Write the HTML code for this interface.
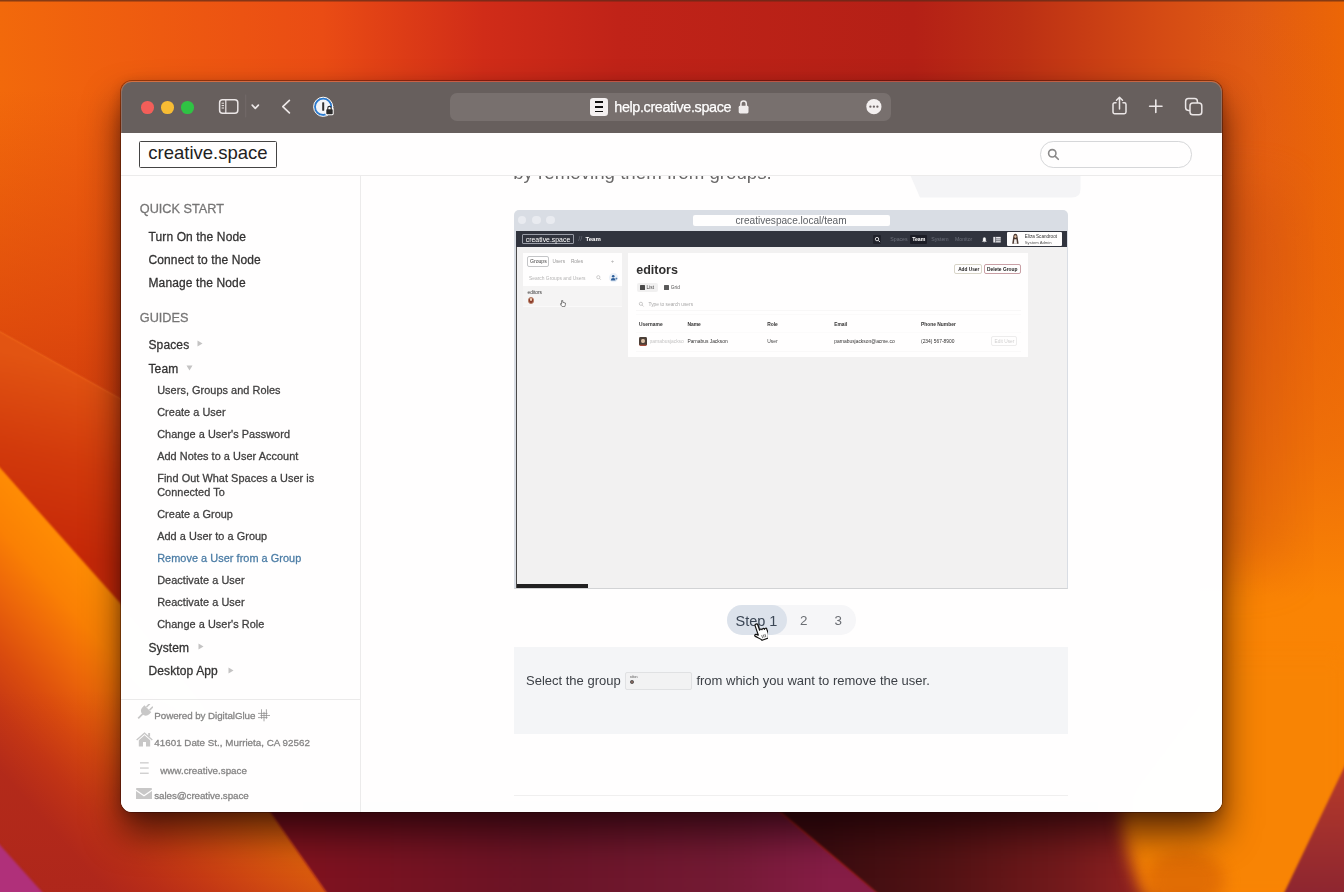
<!DOCTYPE html>
<html lang="en">
<head>
<meta charset="utf-8">
<title>Remove a User from a Group - creative.space help</title>
<style>
*{box-sizing:border-box;margin:0;padding:0}
html,body{width:1344px;height:892px;overflow:hidden;background:#d9480f}
body{font-family:"Liberation Sans",sans-serif;position:relative;color:#3a3a3a}
#wall{position:absolute;left:0;top:0;width:1344px;height:892px;display:block}
#shadow{position:absolute;left:121px;top:81px;width:1101px;height:731px;border-radius:11px;
  box-shadow:0 22px 36px 0 rgba(20,0,4,.68),0 3px 12px 0 rgba(30,0,5,.22),0 0 0 1px rgba(45,12,5,.38)}
#win{opacity:.999;position:absolute;left:121px;top:81px;width:1101px;height:731px;border-radius:11px;overflow:hidden;background:transparent}
#cap{position:absolute;left:0;top:0;width:1101px;height:14px;background:rgba(190,130,110,.55)}
#tbar{position:absolute;left:0;top:1px;width:1101px;height:51px;background:#67605e;border-radius:10px 10px 0 0;box-shadow:inset 1px 0 0 rgba(200,140,120,.4),inset -1px 0 0 rgba(200,140,120,.4)}
.tl{position:absolute;top:19.3px;width:12.6px;height:12.6px;border-radius:50%}
#url{position:absolute;left:329px;top:11.3px;width:441.4px;height:27.4px;border-radius:7px;background:#78716f}
#url .txt{-webkit-text-stroke:.25px;position:absolute;left:164.3px;top:5.9px;font-size:14.4px;line-height:16px;color:#fff;letter-spacing:-.38px;white-space:nowrap}
#fav{position:absolute;left:139.7px;top:4.5px;width:18.2px;height:18.2px;border-radius:3.2px;background:#f4f1f1}
#fav i{position:absolute;left:5.2px;width:8px;height:1.9px;background:#111}
#ticons{position:absolute;left:0;top:0}
#page{position:absolute;left:0;top:52px;width:1101px;height:679px;background:#fff}
#hdr{position:absolute;left:0;top:0;width:1101px;height:43px;border-bottom:1px solid #ececec;background:#fff;z-index:5}
#logo{position:absolute;left:18px;top:8.2px;width:138px;height:26.6px;border:1px solid #444;border-radius:1.5px;
  font-size:18.5px;line-height:21.4px;text-align:center;color:#222;white-space:nowrap}
#search{position:absolute;left:918.6px;top:8.2px;width:152px;height:26.4px;border:1px solid #d6d8da;border-radius:13.2px;background:#fff}
#search svg{position:absolute;left:6px;top:5.6px}
#side{position:absolute;left:0;top:43px;width:240px;height:636px;border-right:1px solid #ececec;background:#fff}
#main{position:absolute;left:240px;top:43px;width:861px;height:636px;background:#fff;overflow:hidden}
.sl{position:absolute;line-height:16px;white-space:nowrap;-webkit-text-stroke:.28px}
.tri,.fi{position:absolute;display:block}
#sdiv{position:absolute;left:0;top:523.4px;width:239px;height:1px;background:#ebebeb}
.t{position:absolute;white-space:nowrap}
</style>
</head>
<body>
<svg id="wall" viewBox="0 0 1344 892" preserveAspectRatio="none">
  <defs>
    <linearGradient id="gtop" x1="0" y1="0" x2="1344" y2="0" gradientUnits="userSpaceOnUse">
      <stop offset="0" stop-color="#f2690b"/>
      <stop offset="0.12" stop-color="#ee5a10"/>
      <stop offset="0.24" stop-color="#ea4c14"/>
      <stop offset="0.36" stop-color="#d02c18"/>
      <stop offset="0.46" stop-color="#c02318"/>
      <stop offset="0.68" stop-color="#b42016"/>
      <stop offset="0.76" stop-color="#bc3014"/>
      <stop offset="0.86" stop-color="#d44a14"/>
      <stop offset="0.93" stop-color="#e05a14"/>
      <stop offset="1" stop-color="#ec6606"/>
    </linearGradient>
    <linearGradient id="gright" x1="0" y1="0" x2="0" y2="892" gradientUnits="userSpaceOnUse">
      <stop offset="0" stop-color="#ec6606" stop-opacity="0"/>
      <stop offset="0.3" stop-color="#ec6a08" stop-opacity=".3"/>
      <stop offset="0.5" stop-color="#f07208" stop-opacity=".8"/>
      <stop offset="0.67" stop-color="#fa8404" stop-opacity="1"/>
      <stop offset="1" stop-color="#f88404" stop-opacity="1"/>
    </linearGradient>
    <linearGradient id="grightx" x1="1222" y1="0" x2="1344" y2="0" gradientUnits="userSpaceOnUse">
      <stop offset="0" stop-color="#c84a10" stop-opacity=".35"/>
      <stop offset="0.6" stop-color="#d85a0c" stop-opacity=".12"/>
      <stop offset="1" stop-color="#e86a08" stop-opacity="0"/>
    </linearGradient>
    <linearGradient id="gA" x1="0" y1="90" x2="0" y2="400" gradientUnits="userSpaceOnUse">
      <stop offset="0" stop-color="#d8420e" stop-opacity="0"/>
      <stop offset="0.75" stop-color="#d8400c" stop-opacity=".7"/>
      <stop offset="1" stop-color="#d03a0c" stop-opacity=".85"/>
    </linearGradient>
    <linearGradient id="gB" x1="40" y1="360" x2="0" y2="540" gradientUnits="userSpaceOnUse">
      <stop offset="0" stop-color="#e25412"/>
      <stop offset="0.5" stop-color="#d23a0c"/>
      <stop offset="1" stop-color="#c62808"/>
    </linearGradient>
    <linearGradient id="gC" x1="60" y1="536" x2="-90" y2="669" gradientUnits="userSpaceOnUse">
      <stop offset="0" stop-color="#ff8c04"/>
      <stop offset="0.2" stop-color="#fa8004"/>
      <stop offset="0.4" stop-color="#ec660a"/>
      <stop offset="0.6" stop-color="#da4c0e"/>
      <stop offset="0.8" stop-color="#c63814"/>
      <stop offset="1" stop-color="#b42c1a"/>
    </linearGradient>
    <linearGradient id="gCd" x1="0" y1="690" x2="0" y2="892" gradientUnits="userSpaceOnUse">
      <stop offset="0" stop-color="#b02418" stop-opacity="0"/>
      <stop offset="1" stop-color="#a8201c" stop-opacity=".45"/>
    </linearGradient>
    <linearGradient id="gD" x1="300" y1="0" x2="830" y2="0" gradientUnits="userSpaceOnUse">
      <stop offset="0" stop-color="#80121f"/>
      <stop offset="0.45" stop-color="#6a1426"/>
      <stop offset="0.8" stop-color="#741a34"/>
      <stop offset="1" stop-color="#861d46"/>
    </linearGradient>
    <linearGradient id="gE" x1="820" y1="0" x2="1130" y2="0" gradientUnits="userSpaceOnUse">
      <stop offset="0" stop-color="#3a0c10"/>
      <stop offset="0.4" stop-color="#521214"/>
      <stop offset="0.8" stop-color="#741a1c"/>
      <stop offset="1" stop-color="#8c2020"/>
    </linearGradient>
    <linearGradient id="gF" x1="0" y1="770" x2="0" y2="892" gradientUnits="userSpaceOnUse">
      <stop offset="0" stop-color="#b63a2a"/>
      <stop offset="1" stop-color="#8e2630"/>
    </linearGradient>
    <filter id="b1" color-interpolation-filters="sRGB" x="-10%" y="-10%" width="120%" height="120%"><feGaussianBlur stdDeviation="0.8"/></filter>
    <filter id="b3" color-interpolation-filters="sRGB" x="-10%" y="-10%" width="120%" height="120%"><feGaussianBlur stdDeviation="3"/></filter>
    <filter id="b8" color-interpolation-filters="sRGB" x="-20%" y="-20%" width="140%" height="140%"><feGaussianBlur stdDeviation="8"/></filter>
    <filter id="b25" color-interpolation-filters="sRGB" x="-30%" y="-30%" width="160%" height="160%"><feGaussianBlur stdDeviation="25"/></filter>
  </defs>
  <rect width="1344" height="892" fill="url(#gtop)"/>
  <!-- right side brightening -->
  <rect x="1200" y="0" width="144" height="892" fill="url(#gright)"/>
  <rect x="1190" y="190" width="95" height="380" fill="#c44a10" opacity=".3" filter="url(#b25)"/>
  <!-- left: slight reddening towards the middle heights -->
  <polygon points="-10,60 420,60 420,560 130,404 -10,326" fill="url(#gA)"/>
  <line x1="-10" y1="327" x2="130" y2="405" stroke="#f4783a" stroke-width="1.6" opacity=".55" filter="url(#b1)"/>
  <!-- region B: between thin ridge and big edge -->
  <polygon points="-10,326 130,404 130,620 -10,457" fill="url(#gB)" filter="url(#b1)"/>
  <!-- region C: big orange sweep -->
  <polygon points="-10,457 121,604 200,700 270,812 340,912 -10,912" fill="url(#gC)" filter="url(#b1)"/>
  <polygon points="-10,457 121,604 200,700 270,812 340,912 -10,912" fill="url(#gCd)"/>
  <!-- magenta corner -->
  <polygon points="-10,834 60,912 -10,912" fill="#b0307a" filter="url(#b1)"/>
  <!-- bottom dark crimson -->
  <polygon points="262,800 340,912 900,912 779,812 779,800" fill="url(#gD)" filter="url(#b1)"/>
  <!-- bottom dark maroon -->
  <polygon points="767,800 900,912 1170,912 1130,800" fill="url(#gE)" filter="url(#b1)"/>
  <!-- orange blob bottom right -->
  <path d="M1122 790 C1118 830 1128 860 1146 900 L1344 900 L1344 660 L1222 660 Z" fill="#f88404" filter="url(#b8)"/>
  <ellipse cx="1185" cy="880" rx="40" ry="30" fill="#d86404" opacity=".7" filter="url(#b8)"/>
  <!-- far right dark wedge -->
  <polygon points="1354,747 1275,912 1354,912" fill="url(#gF)" filter="url(#b1)"/>
  <!-- top dark line -->
  <rect x="0" y="0" width="1344" height="1.5" fill="#5a2a18" opacity=".7"/>
</svg>
<div id="shadow"></div>
<div id="win">
  <div id="cap"></div>
  <div id="tbar">
    <div class="tl" style="left:20.2px;background:#f35f5a"></div>
    <div class="tl" style="left:40.1px;background:#f7bd35"></div>
    <div class="tl" style="left:60.1px;background:#2fc445"></div>
    <div id="url">
      <div id="fav"><i style="top:3.6px"></i><i style="top:8.2px"></i><i style="top:12.8px"></i></div>
      <span class="txt">help.creative.space</span>
    </div>
    <svg id="ticons" width="1101" height="51" viewBox="0 0 1101 51" fill="none" stroke="#ebe7e7" stroke-width="1.5" stroke-linecap="round" stroke-linejoin="round">
      <!-- sidebar toggle -->
      <rect x="98.6" y="17.7" width="18.2" height="13.6" rx="3"/>
      <line x1="104.8" y1="17.9" x2="104.8" y2="31.1" stroke-width="1.2"/>
      <g stroke-width="1" stroke-linecap="butt"><line x1="100.6" y1="21.2" x2="103" y2="21.2"/><line x1="100.6" y1="23.6" x2="103" y2="23.6"/><line x1="100.6" y1="26" x2="103" y2="26"/></g>
      <line x1="124.7" y1="13" x2="124.7" y2="35" stroke="#736b6b" stroke-width="1"/>
      <!-- chevron down -->
      <polyline points="131.2,23.2 134.3,26.3 137.4,23.2" stroke-width="1.7"/>
      <!-- back -->
      <polyline points="168.4,18.4 161.8,24.6 168.4,30.8" stroke-width="1.7"/>
      <!-- 1password -->
      <circle cx="202.2" cy="24.8" r="8.3" fill="#f4f6f9" stroke="#2a7bd0" stroke-width="2"/>
      <circle cx="202.2" cy="24.8" r="9.6" stroke="#fff" stroke-width="1"/>
      <rect x="201.2" y="20.2" width="2" height="8.6" rx=".6" fill="#333" stroke="none"/>
      <rect x="204.3" y="25.6" width="8.4" height="7.6" rx="1.4" fill="#fff" stroke="none"/>
      <rect x="205.3" y="27.3" width="6.4" height="4.9" rx=".8" fill="#2b2b2b" stroke="none"/>
      <path d="M206.8 27.4 v-1.3 a1.7 1.7 0 0 1 3.4 0 v1.3" stroke="#2b2b2b" stroke-width="1.1"/>
      <!-- lock in url -->
      <rect x="617.7" y="23.8" width="9.8" height="7.6" rx="1.4" fill="#f0eded" stroke="none"/>
      <path d="M619.9 24 v-2.3 a2.7 2.7 0 0 1 5.4 0 v2.3" stroke="#f0eded" stroke-width="1.5"/>
      <!-- more button -->
      <circle cx="752.9" cy="24.7" r="7.6" fill="#f3f0f0" stroke="none"/>
      <g fill="#6d6565" stroke="none"><circle cx="749.4" cy="24.7" r="1.15"/><circle cx="752.9" cy="24.7" r="1.15"/><circle cx="756.4" cy="24.7" r="1.15"/></g>
      <!-- share -->
      <path d="M995 20.7 h-1.3 a1.7 1.7 0 0 0 -1.7 1.7 v7.7 a1.7 1.7 0 0 0 1.7 1.7 h9.6 a1.7 1.7 0 0 0 1.7 -1.7 v-7.7 a1.7 1.7 0 0 0 -1.7 -1.7 h-1.3"/>
      <path d="M998.5 27 v-11.4 M995.5 18.2 l3 -3 l3 3"/>
      <!-- plus -->
      <path d="M1028.6 24.3 h12.4 M1034.8 18.1 v12.4" stroke-width="1.6"/>
      <!-- tabs -->
      <rect x="1064.6" y="16.6" width="11.8" height="11.8" rx="2.8"/>
      <rect x="1069" y="21" width="11.8" height="11.8" rx="2.8" fill="#67605e"/>
    </svg>
  </div>
  <div id="page">
    <div id="side">
      <div class="sl" style="left:18.8px;top:24.8px;font-size:12.7px;color:#767676">QUICK START</div>
      <div class="sl" style="left:27.5px;top:52.8px;font-size:12px;color:#333;letter-spacing:.12px">Turn On the Node</div>
      <div class="sl" style="left:27.5px;top:75.8px;font-size:12px;color:#333;letter-spacing:.12px">Connect to the Node</div>
      <div class="sl" style="left:27.5px;top:98.7px;font-size:12px;color:#333;letter-spacing:.12px">Manage the Node</div>
      <div class="sl" style="left:18.8px;top:133.5px;font-size:12.7px;color:#767676">GUIDES</div>
      <div class="sl" style="left:27.5px;top:161.0px;font-size:12px;color:#333;letter-spacing:.12px">Spaces</div>
      <div class="sl" style="left:27.5px;top:184.6px;font-size:12px;color:#333;letter-spacing:.12px">Team</div>
      <div class="sl" style="left:36.2px;top:206.0px;font-size:10.9px;color:#414141;letter-spacing:.05px">Users, Groups and Roles</div>
      <div class="sl" style="left:36.2px;top:228.1px;font-size:10.9px;color:#414141;letter-spacing:.05px">Create a User</div>
      <div class="sl" style="left:36.2px;top:250.1px;font-size:10.9px;color:#414141;letter-spacing:.05px">Change a User's Password</div>
      <div class="sl" style="left:36.2px;top:272.2px;font-size:10.9px;color:#414141;letter-spacing:.05px">Add Notes to a User Account</div>
      <div class="sl" style="left:36.2px;top:294.3px;font-size:10.9px;color:#414141;letter-spacing:.05px">Find Out What Spaces a User is</div>
      <div class="sl" style="left:36.2px;top:308.2px;font-size:10.9px;color:#414141;letter-spacing:.05px">Connected To</div>
      <div class="sl" style="left:36.2px;top:330.1px;font-size:10.9px;color:#414141;letter-spacing:.05px">Create a Group</div>
      <div class="sl" style="left:36.2px;top:352.1px;font-size:10.9px;color:#414141;letter-spacing:.05px">Add a User to a Group</div>
      <div class="sl" style="left:36.2px;top:374.2px;font-size:10.9px;color:#4b7da6;letter-spacing:.05px">Remove a User from a Group</div>
      <div class="sl" style="left:36.2px;top:396.1px;font-size:10.9px;color:#414141;letter-spacing:.05px">Deactivate a User</div>
      <div class="sl" style="left:36.2px;top:418.1px;font-size:10.9px;color:#414141;letter-spacing:.05px">Reactivate a User</div>
      <div class="sl" style="left:36.2px;top:440.1px;font-size:10.9px;color:#414141;letter-spacing:.05px">Change a User's Role</div>
      <div class="sl" style="left:27.5px;top:463.7px;font-size:12px;color:#333;letter-spacing:.12px">System</div>
      <div class="sl" style="left:27.5px;top:487.3px;font-size:12px;color:#333;letter-spacing:.12px">Desktop App</div>
      <svg class="tri" style="left:76.3px;top:164.2px" width="6" height="7" viewBox="0 0 6 7"><polygon points="0.5,0.5 5.5,3.5 0.5,6.5" fill="#c4c4c4"/></svg>
      <svg class="tri" style="left:65px;top:188.5px" width="7" height="6" viewBox="0 0 7 6"><polygon points="0.5,0.5 6.5,0.5 3.5,5.5" fill="#c4c4c4"/></svg>
      <svg class="tri" style="left:76.5px;top:467px" width="6" height="7" viewBox="0 0 6 7"><polygon points="0.5,0.5 5.5,3.5 0.5,6.5" fill="#c4c4c4"/></svg>
      <svg class="tri" style="left:106.5px;top:490.6px" width="6" height="7" viewBox="0 0 6 7"><polygon points="0.5,0.5 5.5,3.5 0.5,6.5" fill="#c4c4c4"/></svg>
      <div id="sdiv"></div>
      <div class="sl" style="left:33.3px;top:532.1px;font-size:9.8px;color:#858585;letter-spacing:-.06px">Powered by DigitalGlue</div>
      <div class="sl" style="left:33.3px;top:558.9px;font-size:9.8px;color:#858585;letter-spacing:.01px">41601 Date St., Murrieta, CA 92562</div>
      <div class="sl" style="left:39.2px;top:586.5px;font-size:9.8px;color:#858585;letter-spacing:.01px">www.creative.space</div>
      <div class="sl" style="left:33.3px;top:612.2px;font-size:9.8px;color:#858585;letter-spacing:-.085px">sales@creative.space</div>
      <svg class="fi" style="left:16.2px;top:527.6px" width="15.6" height="15.6" viewBox="0 0 16 16" fill="#c8c8c8"><g transform="rotate(45 8 8)"><rect x="4.9" y="-1.6" width="1.7" height="5" rx=".5"/><rect x="9.4" y="-1.6" width="1.7" height="5" rx=".5"/><path d="M3 3.6 H13 V6.6 A5 5 0 0 1 3 6.6 z"/><rect x="7.1" y="11" width="1.8" height="6.6"/></g></svg>
      <svg class="fi" style="left:15.2px;top:556.4px" width="17" height="14.6" viewBox="0 0 17 14.6" fill="#c8c8c8"><path d="M8.5 .2 L.2 7.4 l.9 1 L8.5 2 l7.4 6.4 .9 -1 z"/><path d="M8.5 3.3 L2.8 8.3 V14.4 H7 V10 H10 V14.4 H14.2 V8.3 z"/><rect x="12.2" y="1" width="1.9" height="3.6"/></svg>
      <svg class="fi" style="left:18.6px;top:586.4px" width="9" height="12" viewBox="0 0 9 12" fill="#cdcdcd"><rect x="0" y=".2" width="8.7" height="1.3"/><rect x="0" y="5.4" width="8.7" height="1.3"/><rect x="0" y="10.6" width="8.7" height="1.3"/></svg>
      <svg class="fi" style="left:15px;top:611.6px" width="16" height="11.8" viewBox="0 0 16 11.8" fill="#c8c8c8"><path d="M0 .9 Q0 0 .9 0 H15.1 Q16 0 16 .9 V1.6 L8 7 L0 1.6 z"/><path d="M0 3 L8 8.5 L16 3 V10.9 Q16 11.8 15.1 11.8 H.9 Q0 11.8 0 10.9 z"/></svg>
<svg class="fi" style="left:136px;top:532px" width="14" height="14" viewBox="0 0 14 14" fill="none" stroke="#8c8c8c" stroke-width=".75"><path d="M1 5.4 H10.5 M3.4 7.5 H13 M1 9.6 H10.5 M4.5 1.3 V10.8 M9.4 1.3 V10.8 M7 3.9 V13.3"/></svg>
    </div>
    <div id="main">
      <div class="t" style="left:152.2px;top:-15.3px;font-size:18.7px;line-height:24px;color:#6a6a6a;letter-spacing:0">by removing them from groups.</div>
      <svg style="position:absolute;left:544px;top:0" width="180" height="24" viewBox="905 176 180 24"><path d="M908 170 L920 197.5 H1072 Q1080.5 197.5 1080.5 189 V170 z" fill="#f4f5f7"/></svg>
      <div style="position:absolute;left:153.3px;top:34.4px;width:554.1px;height:378.6px;background:#d9dee5;border-radius:5px 5px 1px 1px"></div>
      <div style="position:absolute;left:156.5px;top:39.7px;width:8.8px;height:8.8px;background:#e9ecf1;border-radius:50%"></div>
      <div style="position:absolute;left:171.1px;top:39.7px;width:8.8px;height:8.8px;background:#e9ecf1;border-radius:50%"></div>
      <div style="position:absolute;left:185.0px;top:39.7px;width:8.8px;height:8.8px;background:#e9ecf1;border-radius:50%"></div>
      <div style="position:absolute;left:332.4px;top:38.7px;width:196.3px;height:11.5px;background:#fff;border-radius:2px"></div>
      <div class="t" style="left:374.5px;top:38.0px;font-size:10.1px;line-height:13px;color:#5e6267;letter-spacing:.0px">creativespace.local/team</div>
      <div style="position:absolute;left:155.2px;top:54.5px;width:550.6px;height:357.1px;background:#f2f2f2"></div>
      <div style="position:absolute;left:155.0px;top:54.5px;width:1.0px;height:357.1px;background:#4a4a4a"></div>
      <div style="position:absolute;left:156.0px;top:407.8px;width:71.0px;height:3.8px;background:#222"></div>
      <div style="position:absolute;left:153.3px;top:411.6px;width:554.1px;height:1.4px;background:#d2d4d6;border-radius:0 0 1px 1px"></div>
      <div style="position:absolute;left:155.2px;top:54.5px;width:550.6px;height:16.5px;background:#31353f"></div>
      <div style="position:absolute;left:161.3px;top:58.1px;width:51.8px;height:10.4px;border:.8px solid #9a9ea8;border-radius:1px"></div>
      <div class="t" style="left:164.8px;top:58.7px;font-size:6.9px;line-height:9px;color:#fff">creative.space</div>
      <div class="t" style="left:217.2px;top:58.2px;font-size:7.4px;line-height:10px;color:#6a6e79">//</div>
      <div class="t" style="left:224.5px;top:59.3px;font-size:6px;line-height:8px;color:#fff;font-weight:700">Team</div>
      <div style="position:absolute;left:512.4px;top:58.6px;width:7.6px;height:9.0px;background:#20232c;border-radius:1px"></div>
      <div class="t" style="left:529.3px;top:59.9px;font-size:5.2px;line-height:7px;color:#6d717c">Spaces</div>
      <div style="position:absolute;left:548.8px;top:59.2px;width:17.2px;height:8.6px;background:#1c1e27;border-radius:1px"></div>
      <div class="t" style="left:551.2px;top:60.0px;font-size:5.2px;line-height:7px;color:#fff;font-weight:700">Team</div>
      <div class="t" style="left:570.3px;top:59.9px;font-size:5.2px;line-height:7px;color:#6d717c">System</div>
      <div class="t" style="left:594.0px;top:59.9px;font-size:5.2px;line-height:7px;color:#6d717c">Monitor</div>
      <svg style="position:absolute;left:513px;top:59.5px" width="130" height="8" viewBox="874 235.5 130 8"><circle cx="877" cy="238.6" r="1.7" fill="none" stroke="#fff" stroke-width=".8"/><line x1="878.3" y1="239.9" x2="880" y2="241.6" stroke="#fff" stroke-width=".9"/><path d="M982.4 241 h4 l-.7 -1 v-1.6 a1.3 1.3 0 0 0 -2.6 0 v1.6 z M983.8 241.6 h1.2" fill="#fff" stroke="#fff" stroke-width=".3"/><rect x="993.3" y="236.4" width="7.4" height="5.6" fill="#e8e8ec"/><path d="M995.6 236.4 v5.6 M995.6 238.4 h5.1 M995.6 240.2 h5.1" stroke="#31353f" stroke-width=".6"/></svg>
      <div style="position:absolute;left:646.3px;top:56.0px;width:54.6px;height:14.0px;background:#fff;border-radius:1px"></div>
      <svg style="position:absolute;left:650px;top:57px" width="9" height="12" viewBox="1011 233 9 12"><path d="M1015.4 233.8 c1.6 0 2 1.4 2.2 3.2 l1 6.8 h-6.4 l1 -6.8 c.2 -1.8 .6 -3.2 2.2 -3.2z" fill="#4b3a33"/><ellipse cx="1015.4" cy="236.6" rx="1.1" ry="1.4" fill="#e6c3a8"/><path d="M1014.3 239.2 h2.2 l.5 4.6 h-3.2z" fill="#f2efec"/></svg>
      <div class="t" style="left:663.8px;top:57.8px;font-size:4.6px;line-height:6px;color:#333">Eliza Scandroot</div>
      <div class="t" style="left:663.8px;top:63.9px;font-size:4.2px;line-height:5px;color:#555">System Admin</div>
      <div style="position:absolute;left:162.4px;top:76.9px;width:98.8px;height:33.0px;background:#fff"></div>
      <div style="position:absolute;left:162.4px;top:109.9px;width:98.8px;height:20.5px;background:#f5f5f5"></div>
      <div style="position:absolute;left:162.4px;top:130.4px;width:98.8px;height:1.0px;background:#fafafa"></div>
      <div style="position:absolute;left:166.2px;top:80.4px;width:21.5px;height:10.2px;border:1px solid #c4c6c8;border-radius:2px"></div>
      <div class="t" style="left:169.0px;top:82.3px;font-size:5.1px;line-height:7px;color:#444">Groups</div>
      <div class="t" style="left:191.5px;top:83.0px;font-size:4.8px;line-height:6px;color:#999">Users</div>
      <div class="t" style="left:209.9px;top:83.0px;font-size:4.8px;line-height:6px;color:#999">Roles</div>
      <div class="t" style="left:249.8px;top:80.6px;font-size:6px;line-height:8px;color:#aaa">+</div>
      <div class="t" style="left:168.0px;top:99.6px;font-size:4.9px;line-height:6px;color:#b5b5b5">Search Groups and Users</div>
      <svg style="position:absolute;left:234px;top:96px" width="26" height="12" viewBox="595 272 26 12"><circle cx="598.3" cy="277.2" r="1.6" fill="none" stroke="#b0b0b0" stroke-width=".6"/><line x1="599.5" y1="278.4" x2="600.9" y2="279.8" stroke="#b0b0b0" stroke-width=".6"/><circle cx="613.6" cy="277.7" r="4.6" fill="#eaf1f9"/><circle cx="613.2" cy="276.2" r="1.3" fill="#2d5f9a"/><path d="M610.8 280.4 a2.4 2.4 0 0 1 4.8 0 z" fill="#2d5f9a"/><path d="M615.4 278.6 h2 M616.4 277.6 v2" stroke="#2d5f9a" stroke-width=".6"/></svg>
      <div class="t" style="left:166.5px;top:114.0px;font-size:4.8px;line-height:6px;color:#333">editors</div>
      <div style="position:absolute;left:166.7px;top:120.8px;width:6.8px;height:6.8px;background:#8a3b2a;border-radius:50%;border:1px solid #b9826a"></div>
      <div style="position:absolute;left:168.9px;top:122.4px;width:2.4px;height:2.4px;background:#f0d2b8;border-radius:50%"></div>
      <svg style="position:absolute;left:198.5px;top:123.5px" width="6" height="7" viewBox="0 0 6 7"><path d="M1.6 .6 v3.6 l-1 -.6 v1.2 l1.6 1.8 h2.6 l.6 -2 v-1.6 l-2.6 -.6 v-1.8 z" fill="#fff" stroke="#333" stroke-width=".6"/></svg>
      <div style="position:absolute;left:266.6px;top:76.9px;width:400.9px;height:103.8px;background:#fff"></div>
      <div class="t" style="left:275.2px;top:85.5px;font-size:12.5px;line-height:16px;color:#303030;font-weight:700">editors</div>
      <div style="position:absolute;left:276.3px;top:107.1px;width:20.5px;height:8.6px;background:#f1f1f1;border-radius:2px"></div>
      <div style="position:absolute;left:278.9px;top:109.1px;width:5.4px;height:4.9px;background:#4a4a4a;border-radius:.5px"></div>
      <div class="t" style="left:285.6px;top:108.9px;font-size:4.8px;line-height:6px;color:#444">List</div>
      <div style="position:absolute;left:302.9px;top:109.1px;width:5.4px;height:4.9px;background:#5a5a5a;border-radius:.5px"></div>
      <div class="t" style="left:309.8px;top:108.9px;font-size:4.8px;line-height:6px;color:#555">Grid</div>
      <svg style="position:absolute;left:277px;top:125px" width="8" height="8" viewBox="638 301 8 8"><circle cx="640.9" cy="303.8" r="1.6" fill="none" stroke="#aaa" stroke-width=".6"/><line x1="642.1" y1="305" x2="643.6" y2="306.5" stroke="#aaa" stroke-width=".6"/></svg>
      <div class="t" style="left:287.5px;top:125.9px;font-size:4.8px;line-height:6px;color:#a8a8a8">Type to search users</div>
      <div style="position:absolute;left:275.0px;top:133.8px;width:384.5px;height:0.8px;background:#f8f8f8"></div>
      <div style="position:absolute;left:275.0px;top:137.5px;width:384.5px;height:0.6px;background:#fbfbfb"></div>
      <div style="position:absolute;left:275.0px;top:156.0px;width:384.5px;height:0.6px;background:#fcfcfc"></div>
      <div style="position:absolute;left:275.0px;top:174.5px;width:384.5px;height:0.6px;background:#fafafa"></div>
      <div class="t" style="left:278.0px;top:145.7px;font-size:4.9px;line-height:6px;color:#333;font-weight:700">Username</div>
      <div class="t" style="left:326.4px;top:145.7px;font-size:4.9px;line-height:6px;color:#333;font-weight:700">Name</div>
      <div class="t" style="left:406.2px;top:145.7px;font-size:4.9px;line-height:6px;color:#333;font-weight:700">Role</div>
      <div class="t" style="left:473.2px;top:145.7px;font-size:4.9px;line-height:6px;color:#333;font-weight:700">Email</div>
      <div class="t" style="left:560.0px;top:145.7px;font-size:4.9px;line-height:6px;color:#333;font-weight:700">Phone Number</div>
      <div style="position:absolute;left:278.0px;top:161.4px;width:8.0px;height:8.2px;background:linear-gradient(#4c4038 0,#4c4038 78%,#c2503c 100%);border-radius:1.4px"></div>
      <div style="position:absolute;left:280.4px;top:162.8px;width:3.4px;height:4.6px;background:#dcc2a8;border-radius:50%"></div>
      <div class="t" style="left:288.5px;top:163.4px;font-size:4.9px;line-height:6px;color:#c4c4c4;width:34px;overflow:hidden">parnabusjackson</div>
      <div class="t" style="left:326.4px;top:163.4px;font-size:4.9px;line-height:6px;color:#333">Parnabus Jackson</div>
      <div class="t" style="left:406.2px;top:163.4px;font-size:4.9px;line-height:6px;color:#444">User</div>
      <div class="t" style="left:473.2px;top:163.4px;font-size:4.9px;line-height:6px;color:#333">parnabusjackson@acme.co</div>
      <div class="t" style="left:560.0px;top:163.4px;font-size:4.9px;line-height:6px;color:#333">(234) 567-8900</div>
      <div style="position:absolute;left:629.7px;top:160.0px;width:26.3px;height:10.3px;border:1px solid #ededed;border-radius:2px"></div>
      <div class="t" style="left:633.6px;top:163.4px;font-size:4.8px;line-height:6px;color:#d0d0d0">Edit User</div>
      <div style="position:absolute;left:593.4px;top:87.7px;width:27.2px;height:10.8px;border:1px solid #d9d6c9;border-radius:2px"></div>
      <div class="t" style="left:597.2px;top:90.6px;font-size:4.75px;line-height:6px;color:#222;font-weight:700">Add User</div>
      <div style="position:absolute;left:622.6px;top:87.7px;width:37.3px;height:10.8px;border:1px solid #c9a0a6;border-radius:2px"></div>
      <div class="t" style="left:626.0px;top:90.5px;font-size:4.85px;line-height:6px;color:#222;font-weight:700">Delete Group</div>
      <div style="position:absolute;left:365.6px;top:429.0px;width:129.4px;height:30.0px;background:#f6f7f9;border-radius:15px"></div>
      <div style="position:absolute;left:365.6px;top:429.0px;width:60.8px;height:30.0px;background:#dce3ec;border-radius:15px"></div>
      <div class="t" style="left:374.6px;top:434.7px;font-size:14.5px;line-height:20px;color:#3b4756;letter-spacing:-.05px">Step 1</div>
      <div class="t" style="left:439.1px;top:435.3px;font-size:13.4px;line-height:20px;color:#6b6f75">2</div>
      <div class="t" style="left:473.6px;top:435.3px;font-size:13.4px;line-height:20px;color:#6b6f75">3</div>
      <div style="position:absolute;left:153.3px;top:471.0px;width:554.1px;height:87.0px;background:#f4f6f8"></div>
      <div class="t" style="left:165.0px;top:494.7px;font-size:13px;line-height:20px;color:#3d4248">Select the group</div>
      <div style="position:absolute;left:264.0px;top:496.0px;width:67.0px;height:17.8px;background:#f2f3f4;border:1px solid #e0e2e4;border-radius:2px"></div>
      <div class="t" style="left:269.0px;top:499.7px;font-size:2.6px;line-height:4px;color:#555">editors</div>
      <div style="position:absolute;left:269.0px;top:504.4px;width:3.6px;height:3.6px;background:#8a6a60;border-radius:50%;border:.8px solid #555"></div>
      <div class="t" style="left:335.4px;top:494.7px;font-size:13px;line-height:20px;color:#3d4248">from which you want to remove the user.</div>
      <div style="position:absolute;left:153.3px;top:619.2px;width:554.1px;height:1.0px;background:#f0f0f0"></div>
    </div>
    <div id="hdr">
      <div id="logo">creative.space</div>
      <div id="search"><svg width="13.2" height="13.2" viewBox="0 0 14 14" fill="none" stroke="#8a8a8a" stroke-width="1.7" stroke-linecap="round"><circle cx="5.6" cy="5.6" r="3.9"/><line x1="8.6" y1="8.6" x2="12" y2="12"/></svg></div>
    </div>
  </div>
</div>
<svg id="cur" style="position:absolute;left:741.7px;top:620.6px" width="26" height="26" viewBox="0 0 26 26">
  <g transform="translate(8.2 4.2) rotate(-19 1 1) scale(1.05)">
    <path d="M4.6 1.9 a1.35 1.35 0 0 1 2.7 0 V7.2 a1.2 1.2 0 0 1 2.3 .2 a1.2 1.2 0 0 1 2.3 .5 a1.15 1.15 0 0 1 2.2 .6 V12.4 c0 2 -1 2.8 -1.3 4.6 H6.4 C5.6 15.2 3.2 13.4 1.5 11.4 c-.9 -1.1 .5 -2.3 1.5 -1.5 L4.6 11.2 z" fill="#fff" stroke="#111" stroke-width="1.15" stroke-linejoin="round"/>
    <path d="M7.6 12.2 v3 M9.2 12.2 v3 M10.8 12.2 v3" stroke="#777" stroke-width=".9"/>
  </g>
</svg>
</body>
</html>
